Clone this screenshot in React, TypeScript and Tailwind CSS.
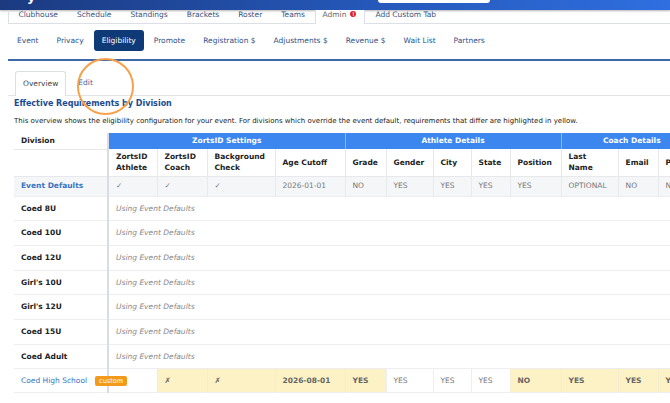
const topTabs = ['Clubhouse', 'Schedule', 'Standings', 'Brackets', 'Roster', 'Teams'];
const subTabs = ['Event', 'Privacy', 'Eligibility', 'Promote', 'Registration $', 'Adjustments $', 'Revenue $', 'Wait List', 'Partners'];
const divisions = ['Coed 8U', 'Coed 10U', 'Coed 12U', "Girl's 10U", "Girl's 12U", 'Coed 15U', 'Coed Adult'];

const subHeads = [
  ['ZortsID', 'Athlete'],
  ['ZortsID', 'Coach'],
  ['Background', 'Check'],
  ['Age Cutoff'],
  ['Grade'],
  ['Gender'],
  ['City'],
  ['State'],
  ['Position'],
  ['Last', 'Name'],
  ['Email'],
  ['Phone'],
];

const defaults = ['✓', '✓', '✓', '2026-01-01', 'NO', 'YES', 'YES', 'YES', 'YES', 'OPTIONAL', 'NO', 'NO'];

// [value, highlighted]
const custom: [string, boolean][] = [
  ['', false],
  ['✗', true],
  ['✗', true],
  ['2026-08-01', true],
  ['YES', true],
  ['YES', false],
  ['YES', false],
  ['YES', false],
  ['NO', true],
  ['YES', true],
  ['YES', true],
  ['YES', true],
];

export default function App() {
  return (
    <div className="relative h-[403px] w-[670px] overflow-hidden bg-white font-['DejaVu_Sans',Verdana,sans-serif] text-[7.5px] text-[#222]">
      {/* Header bar */}
      <div className="flex h-[10px] overflow-hidden bg-gradient-to-r from-[#1b3a80] via-[#2455b4] to-[#2f6fe0] shadow-[0_1px_2px_rgba(0,0,0,0.3)]">
        <span className="ml-[27px] -mt-[10px] w-[10px] text-[13px] font-bold leading-[13px] text-white">y</span>
        <div className="ml-[341px] h-[3px] w-[112px] rounded-b-[3px] bg-white" />
      </div>

      {/* Top tabs */}
      <div className="ml-[8px] flex h-[14px] border-b border-l border-[#dcdfe4] text-[#34527f]">
        {topTabs.map(t => (
          <div key={t} className="px-[9.5px] leading-[9px]">{t}</div>
        ))}
        <div className="-mb-px flex items-start gap-[4px] border-x border-[#dcdfe4] bg-white pl-[7px] pr-[8px] leading-[9px] text-[#666]">
          Admin
          <span className="mt-[1px] flex h-[6px] w-[6px] items-center justify-center rounded-full bg-[#e02424] text-[5px] font-bold leading-none text-white">!</span>
        </div>
        <div className="px-[10px] leading-[9px]">Add Custom Tab</div>
      </div>

      {/* Sub tabs */}
      <div className="ml-[8px] flex h-[35px] items-start gap-[2px] pl-[1px] pt-[6px] text-[#2d5289]">
        {subTabs.map(t => (
          <div
            key={t}
            className={
              t === 'Eligibility'
                ? 'flex h-[21px] items-center rounded-[3px] bg-[#0f3a78] px-[8px] text-white'
                : 'flex h-[21px] items-center px-[8px]'
            }
          >
            {t}
          </div>
        ))}
      </div>
      <div className="ml-[8px] h-[2px] bg-[#3f68aa]" />

      {/* Overview / Edit */}
      <div className="ml-[8px] mt-[10px] flex gap-[4px] border-b border-[#e2e4e8] pl-[7px]">
        <div className="-mb-px flex h-[25px] items-center rounded-t-[3px] border border-b-0 border-[#dcdfe4] bg-white px-[7px] text-[#444]">
          Overview
        </div>
        <div className="flex items-center px-[8px] text-[#3d5f95]">Edit</div>
      </div>

      <div className="ml-[14px] mt-[3px] text-[8px] font-bold leading-[10px] text-[#1b4b8f]">
        Effective Requirements by Division
      </div>
      <div className="ml-[14px] mt-[7px] whitespace-nowrap text-[7px] leading-[10px] text-[#222]">
        This overview shows the eligibility configuration for your event. For divisions which override the event default, requirements that differ are highlighted in yellow.
      </div>

      {/* Table */}
      <table className="ml-[14px] mt-[7px] w-[688px] table-fixed border-collapse">
        <colgroup>
          <col className="w-[94px]" />
          <col className="w-[49px]" />
          <col className="w-[50px]" />
          <col className="w-[68px]" />
          <col className="w-[70px]" />
          <col className="w-[41px]" />
          <col className="w-[47px]" />
          <col className="w-[38px]" />
          <col className="w-[39px]" />
          <col className="w-[51px]" />
          <col className="w-[57px]" />
          <col className="w-[40px]" />
          <col className="w-[44px]" />
        </colgroup>
        <thead>
          <tr className="h-[16px]">
            <th className="border-b border-r-2 border-[#e6e8ec] border-r-[#d8dce4] pl-[7px] text-left font-bold">Division</th>
            <th colSpan={4} className="bg-[#3b87ef] text-center font-bold text-white">ZortsID Settings</th>
            <th colSpan={5} className="border-l border-[#8db6f4] bg-[#3b87ef] text-center font-bold text-white">Athlete Details</th>
            <th colSpan={3} className="border-l border-[#8db6f4] bg-[#3b87ef] text-center font-bold text-white">Coach Details</th>
          </tr>
          <tr className="h-[27px] border-b border-[#e6e8ec]">
            <th className="border-r-2 border-r-[#d8dce4]" />
            {subHeads.map((h, i) => (
              <th key={i} className="whitespace-nowrap border-l border-[#e6e8ec] pl-[7px] text-left align-middle font-bold leading-[11px]">
                {h.map(l => (
                  <div key={l}>{l}</div>
                ))}
              </th>
            ))}
          </tr>
        </thead>
        <tbody>
          <tr className="h-[20px] border-b border-[#eceef1] bg-[#f5f6f8]">
            <td className="border-r-2 border-r-[#d8dce4] pl-[7px] font-bold text-[#3874c4]">Event Defaults</td>
            {defaults.map((v, i) => (
              <td key={i} className="whitespace-nowrap border-l border-[#e8eaee] pl-[7px] text-[#777]">{v}</td>
            ))}
          </tr>
          {divisions.map(d => (
            <tr key={d} className="h-[24.7px] border-b border-[#eceef1]">
              <td className="border-r-2 border-r-[#d8dce4] pl-[7px] font-bold">{d}</td>
              <td colSpan={12} className="pl-[7px] italic text-[#888]">Using Event Defaults</td>
            </tr>
          ))}
          <tr className="h-[24px] border-b border-[#eceef1]">
            <td className="whitespace-nowrap border-r-2 border-r-[#d8dce4] pl-[7px] text-[#3874c4]">
              Coed High School
              <span className="ml-[8px] inline-block rounded-[2px] bg-[#f39a1c] px-[4px] align-middle text-[6.5px] leading-[10px] text-white">custom</span>
            </td>
            {custom.map(([v, hi], i) => (
              <td
                key={i}
                className={
                  hi
                    ? 'whitespace-nowrap border-l border-[#f3ecd0] bg-[#fdf2c5] pl-[7px] font-bold text-[#666]'
                    : 'whitespace-nowrap border-l border-[#eceef1] pl-[7px] text-[#777]'
                }
              >
                {v === '✗' ? <span className="font-normal">{v}</span> : v}
              </td>
            ))}
          </tr>
        </tbody>
      </table>

      {/* Cursor highlight */}
      <div className="pointer-events-none absolute left-[77px] top-[58px] h-[57px] w-[57px] rounded-full border-2 border-[#f6a24c]" />
    </div>
  );
}
